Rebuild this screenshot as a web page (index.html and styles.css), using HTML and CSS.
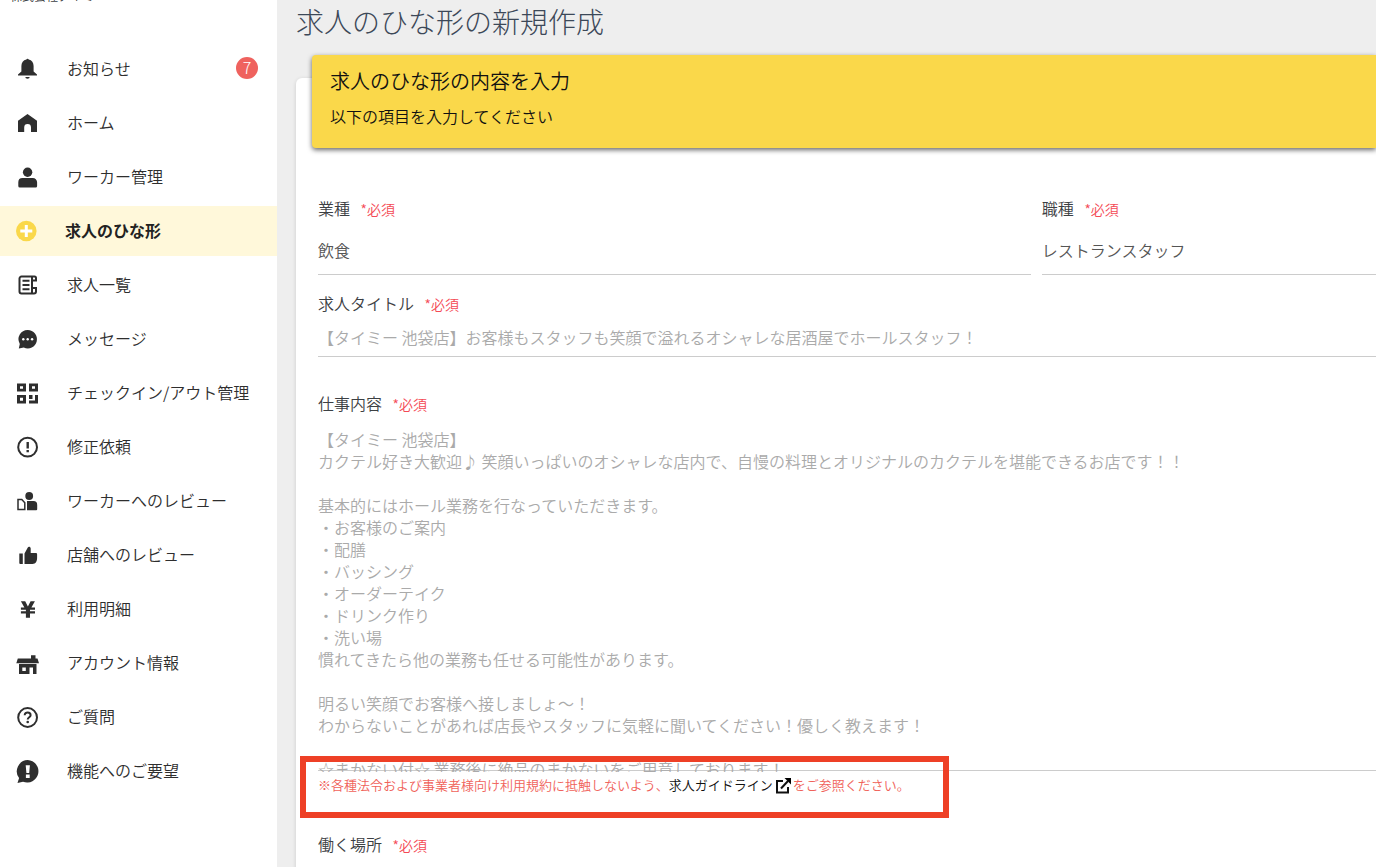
FILE: index.html
```html
<!DOCTYPE html>
<html lang="ja">
<head>
    <meta charset="UTF-8" />
    <meta name="viewport" content="width=device-width, initial-scale=1" />
    <title>求人のひな形の新規作成</title>
    <link rel="stylesheet" href="styles.css">
</head>
<body>
    <aside class="sidebar">
        <div class="company"><p>株式会社タイミー</p></div>
        <nav class="menu">
            <a href="#">
                <svg viewBox="0 0 24 24"><path d="M10.4 2.6a1.2 1.2 0 0 1 2.3 0C15.9 3.3 17.6 5.8 17.6 9v5.600l3.400 3v.9H2v-.9l3.400-3V9c0-3.200 1.800-5.700 5-6.400zM9.300 20h4.400a2.200 1.800 0 0 1-4.400 0z"/></svg>
                <span>お知らせ</span>
                <span class="badge">7</span>
            </a>
            <a href="#">
                <svg viewBox="0 0 24 24"><path d="M11.5 3 21 9.7V21h-6v-4.5a3.400 3.400 0 0 0-6.800 0V21H2V9.700z"/></svg>
                <span>ホーム</span>
            </a>
            <a href="#">
                <svg viewBox="0 0 24 24"><circle cx="11.6" cy="7.3" r="4.7"/><path d="M6.5 13h10.3a4.3 4.3 0 0 1 4.3 4.3V21a1.5 1.5 0 0 1-1.5 1.5H3.800A1.500 1.500 0 0 1 2.300 21v-3.700A4.300 4.300 0 0 1 6.500 13z"/></svg>
                <span>ワーカー管理</span>
            </a>
            <a href="#" class="active">
                <svg viewBox="0 0 24 24"><circle class="plus-bg" cx="12.3" cy="12" r="10.3"/><path class="plus" d="M12.3 6v12M6.3 12h12"/></svg>
                <span>求人のひな形</span>
            </a>
            <a href="#">
                <svg viewBox="0 0 24 24"><g class="line"><path d="M16 3.5H5.500a2 2 0 0 0-2 2v13a2 2 0 0 0 2 2H18a2 2 0 0 0 2-2v-3.500h-4M16 3.500v17M16 3.500h2.500a1.500 1.500 0 0 1 1.500 1.500v2.500h-3"/><path d="M6.500 7.700h7M6.500 12h7M6.500 16.300h7"/></g></svg>
                <span>求人一覧</span>
            </a>
            <a href="#">
                <svg viewBox="0 0 24 24"><path d="M11.8 3a9.200 9.200 0 1 1-4 17.500L2.800 21.500l1-4.600A9.200 9.200 0 0 1 11.800 3z"/><g class="hole"><circle cx="7.3" cy="12.2" r="1.2"/><circle cx="11.7" cy="12.2" r="1.2"/><circle cx="16.1" cy="12.2" r="1.2"/></g></svg>
                <span>メッセージ</span>
            </a>
            <a href="#">
                <svg viewBox="0 0 24 24"><path fill-rule="evenodd" d="M1 2.500h9v8H1zM4 5.200v2.600h3V5.200zM13 2.500h9v8h-9zM16 5.200v2.600h3V5.200zM1 14h9v8.500H1zM4 16.800v2.900h3v-2.900zM13 14h3.500v4H13zM19 14h3v8.500h-9v-3h6z"/></svg>
                <span>チェックイン/アウト管理</span>
            </a>
            <a href="#">
                <svg viewBox="0 0 24 24"><circle class="ring" cx="11.6" cy="12.2" r="9.4"/><path d="M10.500 7h2.400v6.500h-2.400zM10.500 15h2.400v2.300h-2.400z"/></svg>
                <span>修正依頼</span>
            </a>
            <a href="#">
                <svg viewBox="0 0 24 24"><circle cx="13.2" cy="7" r="3.9"/><path d="M11 12h6.500a3.700 3.700 0 0 1 3.700 3.700v4.600a1 1 0 0 1-1 1H11z"/><path class="thin" d="M2 10.500h3.800l3 3.200v6.800H2z"/></svg>
                <span>ワーカーへのレビュー</span>
            </a>
            <a href="#">
                <svg viewBox="0 0 24 24"><path d="M3.300 10.500h3.500V21H4.300a1 1 0 0 1-1-1zM8.500 10.500l3.300-6.100c.6-1.100 2.900-.7 2.900 1v4.500h5.200a1.200 1.200 0 0 1 1.200 1.300v3.600c0 3.700-1.400 6.200-4.600 6.200h-8z"/></svg>
                <span>店舗へのレビュー</span>
            </a>
            <a href="#">
                <svg viewBox="0 0 24 24"><path d="M4.900 4.300h4.300l2.700 5.200 2.700-5.200h4.300l-3.500 6.200H19v2.200h-5v1.500h5v2.300h-5v4.200H9.900v-4.200h-5v-2.300h5v-1.500h-5v-2.200h3.500z"/></svg>
                <span>利用明細</span>
            </a>
            <a href="#">
                <svg viewBox="0 0 24 24"><path fill-rule="evenodd" d="M15 4.300h4.500v3.200h2l1.500 4.800H.3l1.500-4.800H15zM3 13h17.500v10H17v-6.500h-3.500V23H3zM6.300 16.500v3.500h3.500v-3.500z"/></svg>
                <span>アカウント情報</span>
            </a>
            <a href="#">
                <svg viewBox="0 0 24 24"><circle class="ring" cx="11.6" cy="12.5" r="9.4"/><path class="mark" d="M8.700 10.200c0-3.700 5.900-3.500 5.900 0 0 2-2.900 2.100-2.900 4.400"/><circle cx="11.7" cy="17" r="1.3"/></svg>
                <span>ご質問</span>
            </a>
            <a href="#">
                <svg viewBox="0 0 24 24"><path d="M11.800 1A11.300 11.300 0 1 1 7 22.800L1.500 24l1.600-4.900A11.300 11.300 0 0 1 11.800 1z"/><path class="hole" d="M9.700 6.300h4.200l-.7 7.700h-2.800zM9.900 15.500h3.800v3.400H9.900z"/></svg>
                <span>機能へのご要望</span>
            </a>
        </nav>
    </aside>
    <main>
        <h1>求人のひな形の新規作成</h1>
        <section class="card">
            <header class="banner">
                <h2>求人のひな形の内容を入力</h2>
                <p>以下の項目を入力してください</p>
            </header>
            <form>
                <div class="row">
                    <div class="field">
                        <label for="industry">業種 <span class="required">*必須</span></label>
                        <select id="industry">
                            <option>飲食</option>
                        </select>
                    </div>
                    <div class="field">
                        <label for="job">職種 <span class="required">*必須</span></label>
                        <select id="job">
                            <option>レストランスタッフ</option>
                        </select>
                    </div>
                </div>
                <div class="field field-title">
                    <label for="title">求人タイトル <span class="required">*必須</span></label>
                    <input type="text" id="title" placeholder="【タイミー 池袋店】お客様もスタッフも笑顔で溢れるオシャレな居酒屋でホールスタッフ！">
                </div>
                <div class="field field-detail">
                    <label for="detail">仕事内容 <span class="required">*必須</span></label>
                    <textarea id="detail" placeholder="【タイミー 池袋店】
カクテル好き大歓迎♪ 笑顔いっぱいのオシャレな店内で、自慢の料理とオリジナルのカクテルを堪能できるお店です！！

基本的にはホール業務を行なっていただきます。
・お客様のご案内
・配膳
・バッシング
・オーダーテイク
・ドリンク作り
・洗い場
慣れてきたら他の業務も任せる可能性があります。

明るい笑顔でお客様へ接しましょ〜！
わからないことがあれば店長やスタッフに気軽に聞いてください！優しく教えます！

☆まかない付☆ 業務後に絶品のまかないをご用意しております！"></textarea>
                    <p class="note">※各種法令および事業者様向け利用規約に抵触しないよう、<a href="#">求人ガイドライン<svg viewBox="0 0 16 16"><path class="frame" d="M8 3H2v11.500h11V9"/><path class="frame" d="M6 10.500 13 3"/><path d="M9.500 0H16v6.500z"/></svg></a>をご参照ください。</p>
                </div>
                <div class="field field-place">
                    <label for="place">働く場所 <span class="required">*必須</span></label>
                    <input type="text" id="place">
                </div>
            </form>
        </section>
    </main>
</body>
</html>
```
FILE: styles.css
```css
* {
    margin: 0;
    padding: 0;
    box-sizing: border-box;
}
body {
    display: flex;
    height: 100vh;
    overflow: hidden;
    background-color: #eee;
    color: #3c4043;
    font-family: "Noto Sans CJK JP", sans-serif;
    font-size: 16px;
    font-weight: 350;
    line-height: 24px;
}

/* sidebar */
.sidebar {
    flex: 0 0 277px;
    background-color: #fff;
}
.company {
    display: flex;
    align-items: flex-end;
    height: 4px;
    margin-bottom: 40px;
    padding-left: 10px;
    overflow: hidden;
    font-size: 12px;
    line-height: 16px;
}
.menu {
    display: flex;
    flex-direction: column;
    gap: 4px;
}
.menu a {
    display: flex;
    align-items: center;
    height: 50px;
    padding: 0 19px 3px 16px;
    color: #2e2e2e;
    text-decoration: none;
}
.menu svg {
    flex: none;
    width: 24px;
    height: 24px;
    margin: 3px 27px 0 0;
    fill: #2e2e2e;
    overflow: visible;
}
.menu .active {
    padding-left: 14px;
    background-color: #fff8da;
    color: #222;
    font-weight: 700;
}
.menu .line,
.menu .ring,
.menu .thin,
.menu .mark {
    fill: none;
    stroke: #2e2e2e;
    stroke-width: 2;
}
.menu .thin {
    stroke-width: 1.5;
}
.menu .hole {
    fill: #fff;
}
.menu .plus-bg {
    fill: #fad84a;
}
.menu .plus {
    stroke: #fff;
    stroke-width: 3;
}
.badge {
    width: 22px;
    height: 22px;
    margin-left: auto;
    border-radius: 50%;
    background-color: #ef625e;
    color: #fff;
    font-weight: 300;
    line-height: 21px;
    text-align: center;
}

/* content */
main {
    flex: 1;
    min-width: 0;
    padding-left: 19px;
}
h1 {
    margin-bottom: 36px;
    color: #3c4858;
    font-size: 28px;
    font-weight: 300;
    line-height: 42px;
}
.card {
    padding-left: 22px;
    border-radius: 6px 0 0 0;
    background-color: #fff;
    box-shadow: 0 1px 4px rgba(0, 0, 0, .14);
}
.banner {
    position: relative;
    top: -23px;
    height: 93px;
    margin-left: -6px;
    padding: 12px 18px;
    border-radius: 4px 0 0 4px;
    background-color: #fad84a;
    box-shadow: 0 2px 5px rgba(0, 0, 0, .6);
    color: #111;
}
.banner h2 {
    margin-bottom: 9px;
    font-size: 20px;
    font-weight: 350;
    line-height: 28px;
}
form {
    display: flex;
    flex-direction: column;
    padding-top: 25px;
}
.row {
    display: grid;
    grid-template-columns: 32fr 15fr;
    gap: 11px;
}
.field {
    display: flex;
    flex-direction: column;
}
.field-title {
    margin-top: 16px;
}
.field-detail {
    margin-top: 34px;
}
.field-place {
    margin-top: 34px;
}
.required {
    margin-left: 7px;
    color: #f44a55;
    font-size: 14px;
    line-height: 14px;
}
select,
input,
textarea {
    width: 100%;
    border: 0;
    border-bottom: 1px solid #ccc;
    border-radius: 0;
    outline: 0;
    background: none;
    color: #555;
    font: inherit;
}
select {
    height: 55px;
    padding-top: 6px;
    appearance: none;
}
input {
    height: 42px;
    padding-top: 3px;
}
::placeholder {
    color: #aaa;
    opacity: 1;
}
textarea {
    display: block;
    height: 357px;
    padding-top: 13px;
    border: 0;
    background: linear-gradient(#ccc, #ccc) no-repeat 0 355px / 100% 1px;
    line-height: 22px;
    overflow: hidden;
    resize: none;
}
.note {
    position: relative;
    width: fit-content;
    color: #f0625a;
    font-size: 13px;
    line-height: 26px;
}
.note::before {
    content: "";
    position: absolute;
    inset: -16px -39px -20px -18px;
    border: 6px solid #ee4026;
    pointer-events: none;
}
.note a {
    color: #111;
    text-decoration: none;
}
.note svg {
    width: 16px;
    height: 16px;
    margin: 0 2px;
    vertical-align: middle;
}
.note .frame {
    fill: none;
    stroke: #111;
    stroke-width: 2;
}
```
